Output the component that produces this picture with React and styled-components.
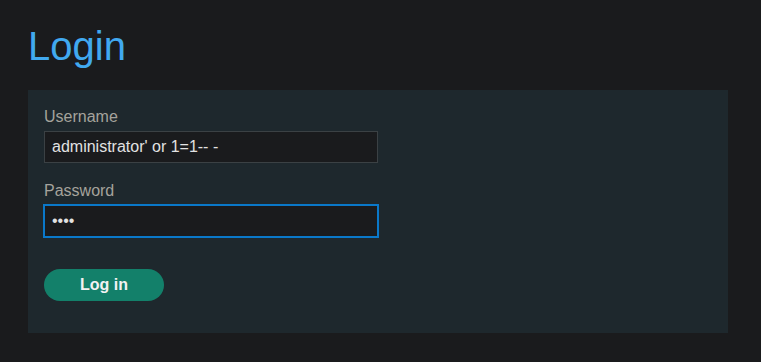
import React, { useState } from 'react';
import styled, { createGlobalStyle } from 'styled-components';

const GlobalStyle = createGlobalStyle`
  html, body {
    margin: 0;
    padding: 0;
    background: #1a1b1d;
  }
  body {
    font-family: "Liberation Sans", Arial, sans-serif;
  }
`;

const Page = styled.div`
  padding: 23px 33px 0 28px;
`;

const Title = styled.h1`
  margin: 0 0 21px;
  font-size: 40px;
  line-height: 46px;
  font-weight: normal;
  color: #41a9f0;
`;

const Panel = styled.form`
  background: #1e282d;
  padding: 18px 16px 32px;
  display: flex;
  flex-direction: column;
  align-items: flex-start;
`;

const Label = styled.label`
  display: block;
  font-size: 16px;
  line-height: 18px;
  color: #a5a39c;
  margin-bottom: 5px;
`;

const Field = styled.div`
  display: flex;
  flex-direction: column;
  margin-bottom: ${(p) => p.$gap}px;
`;

const Input = styled.input`
  box-sizing: border-box;
  width: 334px;
  height: 32px;
  padding: 0 7px;
  background: #1a1b1d;
  border: 1px solid ${(p) => (p.$focused ? '#0a78c9' : '#3b4144')};
  outline: ${(p) => (p.$focused ? '1px solid #0a78c9' : 'none')};
  color: #e2e2e2;
  font-family: "Liberation Sans", Arial, sans-serif;
  font-size: 16px;
`;

const Button = styled.button`
  width: 120px;
  height: 32px;
  border: none;
  border-radius: 16px;
  background: #13806a;
  color: #f2f2f2;
  font-family: "Liberation Sans", Arial, sans-serif;
  font-size: 16px;
  font-weight: bold;
  cursor: pointer;
`;

const App = () => {
  const [username, setUsername] = useState("administrator' or 1=1-- -");
  const [password, setPassword] = useState('abcd');

  return (
    <>
      <GlobalStyle />
      <Page>
        <Title>Login</Title>
        <Panel onSubmit={(e) => e.preventDefault()}>
          <Field $gap={19}>
            <Label htmlFor="username">Username</Label>
            <Input
              id="username"
              type="text"
              value={username}
              onChange={(e) => setUsername(e.target.value)}
            />
          </Field>
          <Field $gap={32}>
            <Label htmlFor="password">Password</Label>
            <Input
              id="password"
              type="password"
              $focused
              value={password}
              onChange={(e) => setPassword(e.target.value)}
            />
          </Field>
          <Button type="submit">Log in</Button>
        </Panel>
      </Page>
    </>
  );
};

export default App;
